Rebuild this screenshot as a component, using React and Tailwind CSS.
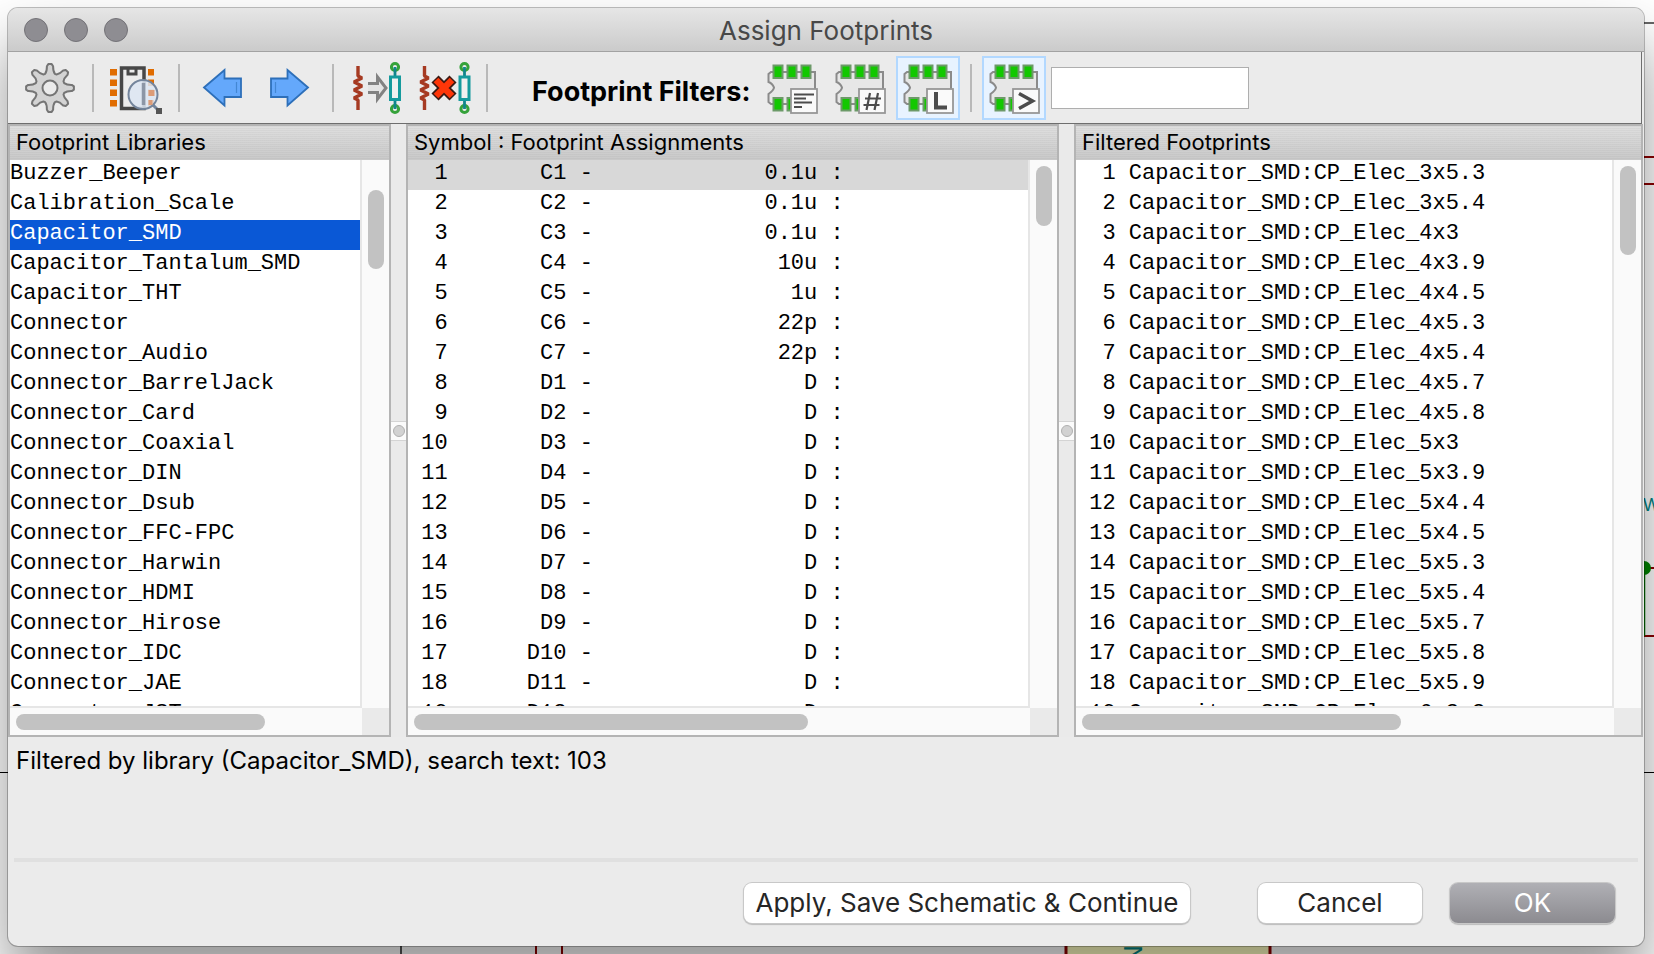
import React from "react";

const libraries = [
  "Buzzer_Beeper",
  "Calibration_Scale",
  "Capacitor_SMD",
  "Capacitor_Tantalum_SMD",
  "Capacitor_THT",
  "Connector",
  "Connector_Audio",
  "Connector_BarrelJack",
  "Connector_Card",
  "Connector_Coaxial",
  "Connector_DIN",
  "Connector_Dsub",
  "Connector_FFC-FPC",
  "Connector_Harwin",
  "Connector_HDMI",
  "Connector_Hirose",
  "Connector_IDC",
  "Connector_JAE",
  "Connector_JST",
];

const symbols = [
  ["C1", "0.1u"],
  ["C2", "0.1u"],
  ["C3", "0.1u"],
  ["C4", "10u"],
  ["C5", "1u"],
  ["C6", "22p"],
  ["C7", "22p"],
  ["D1", "D"],
  ["D2", "D"],
  ["D3", "D"],
  ["D4", "D"],
  ["D5", "D"],
  ["D6", "D"],
  ["D7", "D"],
  ["D8", "D"],
  ["D9", "D"],
  ["D10", "D"],
  ["D11", "D"],
  ["D12", "D"],
].map(
  ([ref, value], i) =>
    String(i + 1).padStart(3) + ref.padStart(9) + " - " + value.padStart(16) + " :"
);

const footprints = [
  "3x5.3", "3x5.4", "4x3", "4x3.9", "4x4.5", "4x5.3", "4x5.4", "4x5.7", "4x5.8", "5x3",
  "5x3.9", "5x4.4", "5x4.5", "5x5.3", "5x5.4", "5x5.7", "5x5.8", "5x5.9", "6.3x3",
].map((size, i) => String(i + 1).padStart(3) + " Capacitor_SMD:CP_Elec_" + size);

function gearPath() {
  const pts = [];
  const at = (r, deg) => {
    const a = (deg * Math.PI) / 180;
    return `${(32 + r * Math.cos(a)).toFixed(1)} ${(32 + r * Math.sin(a)).toFixed(1)}`;
  };
  for (let i = 0; i < 8; i++) {
    const a = i * 45;
    pts.push(`${i ? "L" : "M"}${at(15, a - 19)}`);
    pts.push(`Q${at(17, a - 10)} ${at(22, a - 8)}`);
    pts.push(`L${at(24, a - 4)}`);
    pts.push(`L${at(24, a + 4)}`);
    pts.push(`L${at(22, a + 8)}`);
    pts.push(`Q${at(17, a + 10)} ${at(15, a + 19)}`);
  }
  return pts.join(" ") + "Z";
}

const Icon = ({ children }) => (
  <svg viewBox="0 0 64 64" className="size-full" fill="none" aria-hidden="true">
    {children}
  </svg>
);

const GearIcon = () => (
  <Icon>
    <path d={gearPath()} fill="#d3d3d3" stroke="#757575" strokeWidth="2" strokeLinejoin="round" />
    <circle cx="32" cy="32" r="7.500" fill="#ebebeb" stroke="#757575" strokeWidth="2" />
  </Icon>
);

const BrowseIcon = () => (
  <Icon>
    {[13, 23.5, 33.5, 44].map((y) => (
      <g key={y} fill="#e06c00">
        <rect x="6" y={y} width="7" height="6.500" />
        <rect x="44" y={y} width="6" height="6.500" />
      </g>
    ))}
    <rect x="17.500" y="12" width="22.500" height="40.500" fill="#ececec" stroke="#474747" strokeWidth="3.500" />
    <path d="M24 12v6h8v-6" stroke="#474747" strokeWidth="3" />
    <circle cx="39" cy="38.500" r="14.500" fill="#dde6f3" fillOpacity=".85" stroke="#74859c" strokeWidth="2" />
    <path d="M39.500 27v22" stroke="#8c96a6" strokeWidth="3.500" />
    <path d="M44.500 34h6v6h-6zM44.500 44h4v5h-4z" fill="#dc9c78" />
    <path d="M49 49l5 5" stroke="#74859c" strokeWidth="3" />
    <rect x="52" y="52" width="6" height="6" fill="#555" />
  </Icon>
);

const ArrowIcon = ({ right }) => (
  <Icon>
    <g transform={right ? "translate(64 0) scale(-1 1)" : undefined}>
      <path
        d="M14 31.500L34.500 14V22.500H51V41H34.500V49.500Z"
        fill="#64a8fb"
        stroke="#2d6fb9"
        strokeWidth="1.800"
      />
      <path d="M46.500 26v11" stroke="#4387d3" strokeWidth="1.200" />
    </g>
  </Icon>
);

const Resistor = ({ x }) => (
  <path
    d={`M${x} 10v10l4 2l-8 4l8 4l-8 4l8 4l-8 4l4 2v10`}
    stroke="#a63a22"
    strokeWidth="3.400"
    strokeLinejoin="bevel"
  />
);

const Pads = ({ x }) => (
  <g>
    <circle cx={x} cy="11" r="3.600" stroke="#35a23a" strokeWidth="3" />
    <circle cx={x} cy="53" r="3.600" stroke="#35a23a" strokeWidth="3" />
    <path d={`M${x} 11v10M${x} 43v10`} stroke="#12858c" strokeWidth="2.800" />
    <rect x={x - 4.5} y="21" width="9" height="22.500" fill="#f0f0f0" stroke="#159a9d" strokeWidth="3" />
  </g>
);

const AssignIcon = () => (
  <Icon>
    <Resistor x={14} />
    <path
      d="M24 27.500h9.500v-6.500L42 32l-8.500 11V36.500h-9.500"
      fill="#e4e4e4"
      stroke="#828282"
      strokeWidth="3"
    />
    <Pads x={51} />
  </Icon>
);

const DeleteIcon = () => (
  <Icon>
    <Resistor x={12.5} />
    <Pads x={52.5} />
    <path d="M23 23L41 41M41 23L23 41" stroke="#3a1a14" strokeWidth="10" />
    <path d="M24 24L40 40M40 24L24 40" stroke="#ff3608" strokeWidth="6.500" />
  </Icon>
);

const FilterIcon = ({ glyph }) => (
  <Icon>
    <path
      d="M11 16H55V48H11L8.500 46V38Q14 34 14 31.500Q12 27 8.500 26V18Z"
      fill="#e7e7e7"
      stroke="#8b8b8b"
      strokeWidth="2"
    />
    <g fill="#12c800" stroke="#6c9a68" strokeWidth="2">
      <rect x="13.500" y="9.500" width="9" height="12.500" />
      <rect x="27.500" y="9.500" width="9" height="12.500" />
      <rect x="41.500" y="9.500" width="9" height="12.500" />
      <rect x="13.500" y="42" width="9" height="12.500" />
      <rect x="27.500" y="42" width="9" height="12.500" />
    </g>
    <rect x="31" y="33" width="26" height="24" fill="#fafafa" stroke="#979797" strokeWidth="1.800" />
    {glyph === "lines" && (
      <path d="M34 38.500h20M34 42.500h12M34 46.500h18M34 51h8" stroke="#4c4c4c" strokeWidth="1.800" />
    )}
    {glyph === "#" && (
      <path d="M42 37l-3.500 17M50 37l-3.500 17M37 42.500h16M35.500 49h16" stroke="#4c4c4c" strokeWidth="2.200" />
    )}
    {glyph === "L" && <path d="M40 36v15.500h11" stroke="#4c4c4c" strokeWidth="4" />}
    {glyph === ">" && <path d="M37 37.500l13.500 7.500l-13.500 7.500" stroke="#4c4c4c" strokeWidth="3.500" />}
  </Icon>
);

const ToolButton = ({ label, active, children }) => (
  <button
    type="button"
    aria-label={label}
    className={
      "relative size-16 shrink-0 " +
      (active ? "bg-[#e8f3ff] outline-2 -outline-offset-2 outline-[#b2d8ff]" : "")
    }
  >
    {children}
  </button>
);

const Separator = () => <div className="mx-1.5 h-12 w-0.5 shrink-0 bg-[#b9b9b9]" />;

const Pane = ({ title, rows, selected, selectedClass, grow, hThumb, vThumb }) => (
  <section className={"flex min-w-0 flex-col border-2 border-[#b4b4b4] " + grow}>
    <h2 className="flex h-[34px] shrink-0 items-center bg-[repeating-linear-gradient(to_bottom,rgba(0,0,0,0.03)_0_1px,transparent_1px_2px),linear-gradient(to_bottom,#dfdfdf,#c9c9c9)] pb-0.5 pl-1.5 text-[22px] leading-8 whitespace-nowrap">
      {title}
    </h2>
    <div className="flex min-h-0 flex-1">
      <ul
        role="listbox"
        aria-label={title}
        className="min-w-0 flex-1 overflow-hidden border-r-2 border-b-2 border-[#e6e6e6] bg-white font-['Liberation_Mono',monospace] text-[22px] leading-7"
      >
        {rows.map((row, i) => (
          <li
            key={row}
            role="option"
            aria-selected={i === selected}
            className={"h-[30px] whitespace-pre " + (i === selected ? selectedClass : "")}
          >
            {row}
          </li>
        ))}
      </ul>
      <div className="flex w-[27px] shrink-0 flex-col items-center bg-[#fafafa] pt-1.5">
        <div className={"w-4 rounded-full bg-[#c2c2c2] " + vThumb} />
      </div>
    </div>
    <div className="flex h-[27px] shrink-0">
      <div className="flex flex-1 items-center bg-[#fafafa] pl-1.5">
        <div className={"h-4 rounded-full bg-[#c2c2c2] " + hThumb} />
      </div>
      <div className="w-[27px] bg-[#eaeaea]" />
    </div>
  </section>
);

const Splitter = () => (
  <div className="flex w-[15px] shrink-0 items-center bg-[#eaeaea]">
    <div className="flex h-5 w-full items-center justify-center border-y border-[#d4d4d4] bg-[#fbfbfb]">
      <div className="size-3 rounded-full border border-[#b0b0b0] bg-[#d2d2d2]" />
    </div>
  </div>
);

const DialogButton = ({ children, className }) => (
  <button
    type="button"
    className={
      "h-10 rounded-lg text-[26px] leading-8 whitespace-nowrap shadow-[0_0_0_1px_#c8c8c8,0_1px_1px_1px_rgba(0,0,0,0.2)] " +
      className
    }
  >
    {children}
  </button>
);

/* Schematic sheet that lies behind the dialog. */
const Schematic = () => (
  <>
    <svg className="absolute top-0 right-0" width="12" height="954" aria-hidden="true">
      <path d="M0 23h12" stroke="#666" strokeWidth="2" />
      <path d="M0 157h12M0 184h12M6 568h6M2 636h10" stroke="#8c0000" strokeWidth="2" />
      <path d="M2.500 568v68" stroke="#007800" strokeWidth="1.500" />
      <circle cx="2" cy="568" r="7" fill="#008400" />
      <path d="M0 772.500h12" stroke="#000" />
      <text x="1" y="511" fontSize="18" fontFamily="Liberation Sans, sans-serif" fill="#008484">
        W
      </text>
    </svg>
    <svg className="absolute top-0 left-0" width="1300" height="954" aria-hidden="true">
      <path d="M0 772.500h12" stroke="#000" />
      <path d="M401 940v14" stroke="#555" strokeWidth="2" />
      <path d="M536 940v14M562 940v14" stroke="#8c0000" strokeWidth="2" />
      <rect x="1066" y="900" width="204" height="80" fill="#ffffc2" stroke="#8c0000" strokeWidth="3" />
      <text
        transform="translate(1142 964) rotate(-90)"
        fontSize="26"
        fontFamily="Liberation Sans, sans-serif"
        fill="#008484"
      >
        N
      </text>
    </svg>
  </>
);

export default function App() {
  return (
    <div className="relative isolate flex h-screen overflow-hidden bg-white pt-2 pr-2.5 pb-2 pl-2 font-[Inter,sans-serif] text-black">
      <Schematic />
      <main className="relative flex min-w-0 flex-1 flex-col overflow-hidden rounded-[10px] bg-[#ebebeb] shadow-[0_0_0_1px_rgba(0,0,0,0.25),0_36px_60px_rgba(0,0,0,0.42)]">
        <header className="flex h-11 shrink-0 items-center border-b border-[#a2a2a2] bg-linear-to-b from-[#e6e6e6] to-[#cbcbcb] px-4">
          <div className="flex flex-1 gap-4">
            {["Close", "Minimize", "Zoom"].map((name) => (
              <button
                key={name}
                type="button"
                aria-label={name}
                className="size-6 rounded-full border border-[#737277] bg-[#8e8d92]"
              />
            ))}
          </div>
          <h1 className="pt-0.5 text-[26px] leading-8 text-[#484848]">Assign Footprints</h1>
          <div className="flex-1" />
        </header>

        <div className="mr-0.5 flex h-[72px] shrink-0 items-center gap-1 border-r border-b border-[#6e6e6e] pl-2.5">
          <ToolButton label="Manage footprint library table"><GearIcon /></ToolButton>
          <Separator />
          <ToolButton label="View selected footprint"><BrowseIcon /></ToolButton>
          <Separator />
          <ToolButton label="Previous unassigned symbol"><ArrowIcon /></ToolButton>
          <ToolButton label="Next unassigned symbol"><ArrowIcon right /></ToolButton>
          <Separator />
          <ToolButton label="Automatic association"><AssignIcon /></ToolButton>
          <ToolButton label="Delete all associations"><DeleteIcon /></ToolButton>
          <Separator />
          <label
            htmlFor="filter"
            className="w-[258px] shrink-0 pt-2 pl-[34px] text-[27px] leading-8 font-bold whitespace-nowrap"
          >
            Footprint Filters:
          </label>
          <ToolButton label="Filter by keywords"><FilterIcon glyph="lines" /></ToolButton>
          <ToolButton label="Filter by pin count"><FilterIcon glyph="#" /></ToolButton>
          <ToolButton label="Filter by library" active><FilterIcon glyph="L" /></ToolButton>
          <Separator />
          <ToolButton label="Filter by search text" active><FilterIcon glyph=">" /></ToolButton>
          <input
            id="filter"
            type="text"
            className="ml-px h-[42px] w-[198px] border border-[#aeaeae] bg-white px-2 text-[22px] outline-none"
          />
        </div>

        <div className="mr-px flex min-h-0 flex-1">
          <Pane
            title="Footprint Libraries"
            rows={libraries}
            selected={2}
            selectedClass="bg-[#0a58d6] text-white"
            grow="flex-[379_1_0%]"
            hThumb="w-[72%]"
            vThumb="mt-6 h-[14.5%]"
          />
          <Splitter />
          <Pane
            title="Symbol : Footprint Assignments"
            rows={symbols}
            selected={0}
            selectedClass="bg-[#d8d8d8]"
            grow="flex-[649_1_0%]"
            hThumb="w-[64%]"
            vThumb="h-[11%]"
          />
          <Splitter />
          <Pane
            title="Filtered Footprints"
            rows={footprints}
            selected={-1}
            selectedClass=""
            grow="flex-[565_1_0%]"
            hThumb="w-[60%]"
            vThumb="h-[16.5%]"
          />
        </div>

        <p className="h-[121px] shrink-0 px-2 pt-2 text-[24px] leading-8">
          Filtered by library (Capacitor_SMD), search text: 103
        </p>
        <hr className="mx-1.5 h-1 shrink-0 border-0 bg-[#e0e0e0]" />
        <footer className="flex h-[84px] shrink-0 items-center justify-end pr-[29px] pb-0.5 text-[#262626]">
          <DialogButton className="mr-[68px] w-[446px] bg-white">
            Apply, Save Schematic &amp; Continue
          </DialogButton>
          <DialogButton className="mr-7 w-[164px] bg-white">Cancel</DialogButton>
          <DialogButton className="w-[165px] bg-linear-to-b from-[#b0b0b5] to-[#8c8b90] text-white">
            OK
          </DialogButton>
        </footer>
      </main>
    </div>
  );
}
